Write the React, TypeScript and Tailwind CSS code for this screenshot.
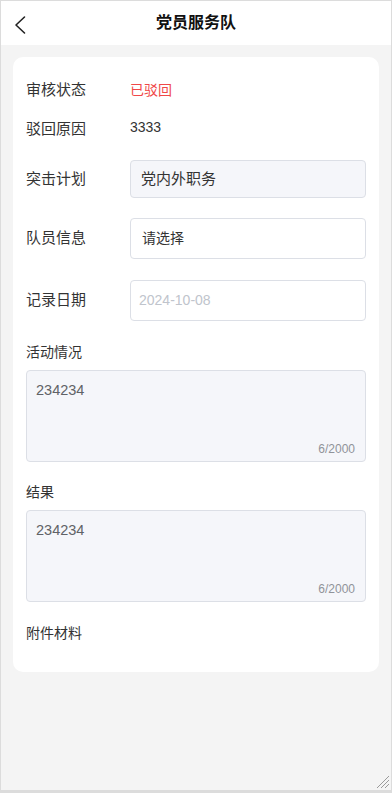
const FONT = {
  fontFamily: '"Liberation Sans", "Noto Sans CJK SC", sans-serif',
};

function FieldRow({
  label,
  children,
  className = "",
}: {
  label: string;
  children: React.ReactNode;
  className?: string;
}) {
  return (
    <div className={`flex items-center ${className}`}>
      <div className="w-[104px] shrink-0 text-[15px] text-[#333]">{label}</div>
      <div className="flex-1">{children}</div>
    </div>
  );
}

function TextBox({ value, count }: { value: string; count: string }) {
  return (
    <div className="relative mt-[8px] h-[92px] rounded-[4px] border border-[#dcdfe6] bg-[#f5f6fa] px-[9px] pt-[9px]">
      <div className="text-[14.5px] text-[#606266]">{value}</div>
      <div className="absolute bottom-[3px] right-[10px] text-[12px] text-[#909399]">
        {count}
      </div>
    </div>
  );
}

export default function App() {
  return (
    <div
      style={FONT}
      className="relative flex h-[793px] w-[392px] flex-col border-x border-t border-b-[3px] border-[#dcdcdc] bg-[#f4f4f4]"
    >
      {/* header */}
      <div className="relative flex h-[44px] shrink-0 items-center justify-center bg-white">
        <svg
          className="absolute left-[12px] top-[14px] h-[20px] w-[14px]"
          viewBox="0 0 14 20"
        >
          <path
            d="M11.5 2 L3 10 L11.5 18"
            stroke="#222"
            strokeWidth="1.6"
            fill="none"
            strokeLinecap="round"
            strokeLinejoin="round"
          />
        </svg>
        <span className="text-[16px] font-bold text-[#111]">党员服务队</span>
      </div>

      <div className="px-[12px] pt-[12px]">
        <div className="rounded-[10px] bg-white px-[13px] pt-[22px] pb-[29px]">
          <FieldRow label="审核状态" className="h-[22px]">
            <span className="text-[14px] text-[#f04848]">已驳回</span>
          </FieldRow>

          <FieldRow label="驳回原因" className="mt-[17px] h-[22px]">
            <span className="relative -top-[2px] text-[14px] text-[#333]">
              3333
            </span>
          </FieldRow>

          <FieldRow label="突击计划" className="mt-[20px]">
            <div className="flex h-[38px] items-center rounded-[4px] border border-[#dcdfe6] bg-[#f5f6fa] px-[10px] text-[15px] text-[#333]">
              党内外职务
            </div>
          </FieldRow>

          <FieldRow label="队员信息" className="mt-[20px]">
            <div className="flex h-[41px] items-center rounded-[4px] border border-[#dcdfe6] bg-white px-[11px] text-[14px] text-[#333]">
              请选择
            </div>
          </FieldRow>

          <FieldRow label="记录日期" className="mt-[21px]">
            <div className="flex h-[41px] items-center rounded-[4px] border border-[#dcdfe6] bg-white px-[8px] text-[14px] text-[#c0c4cc]">
              2024-10-08
            </div>
          </FieldRow>

          <div className="mt-[21px] h-[20px] text-[14px] leading-[20px] text-[#333]">
            活动情况
          </div>
          <TextBox value="234234" count="6/2000" />

          <div className="mt-[20px] h-[20px] text-[14px] leading-[20px] text-[#333]">
            结果
          </div>
          <TextBox value="234234" count="6/2000" />

          <div className="mt-[21px] h-[20px] text-[14px] leading-[20px] text-[#333]">
            附件材料
          </div>
        </div>
      </div>

      {/* resize grip */}
      <svg
        className="absolute bottom-[1px] right-[1px] h-[14px] w-[14px]"
        viewBox="0 0 14 14"
      >
        <path
          d="M13 1 L1 13 M13 5 L5 13 M13 9 L9 13"
          stroke="#9a9a9a"
          strokeWidth="1"
          fill="none"
        />
      </svg>
    </div>
  );
}
